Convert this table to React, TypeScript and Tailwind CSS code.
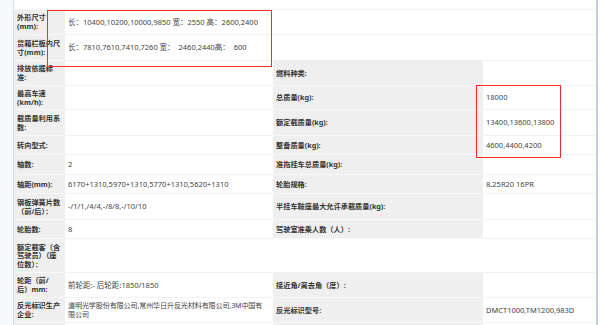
import React from "react";

type Row = {
  h: string;
  label?: React.ReactNode;
  value?: React.ReactNode;
  label2?: React.ReactNode;
  value2?: React.ReactNode;
  wide?: boolean;
  blank?: boolean;
};

const rows: Row[] = [
  { h: "h-[10px]", blank: true },
  {
    h: "h-[25px]",
    label: (
      <>
        外形尺寸
        <br />
        (mm):
      </>
    ),
    value: "长：10400,10200,10000,9850 宽：2550 高：2600,2400",
    wide: true,
  },
  {
    h: "h-[26px]",
    label: (
      <>
        货箱栏板内尺
        <br />
        寸(mm):
      </>
    ),
    value: "长：7810,7610,7410,7260 宽：\u00a0 2460,2440高：\u00a0 600",
    wide: true,
  },
  {
    h: "h-[25px]",
    label: (
      <>
        排放依据标
        <br />
        准:
      </>
    ),
    label2: "燃料种类:",
  },
  {
    h: "h-[24px]",
    label: (
      <>
        最高车速
        <br />
        (km/h):
      </>
    ),
    label2: "总质量(kg):",
    value2: "18000",
  },
  {
    h: "h-[26px]",
    label: (
      <>
        载质量利用系
        <br />
        数:
      </>
    ),
    label2: "额定载质量(kg):",
    value2: "13400,13600,13800",
  },
  {
    h: "h-[19px]",
    label: "转向型式:",
    label2: "整备质量(kg):",
    value2: "4600,4400,4200",
  },
  { h: "h-[20px]", label: "轴数:", value: "2", label2: "准拖挂车总质量(kg):" },
  {
    h: "h-[19px]",
    label: "轴距(mm):",
    value: "6170+1310,5970+1310,5770+1310,5620+1310",
    label2: "轮胎规格:",
    value2: "8.25R20 16PR",
  },
  {
    h: "h-[26px]",
    label: (
      <>
        钢板弹簧片数
        <br />
        （前/后）：
      </>
    ),
    value: "-/1/1,/4/4,-/8/8,-/10/10",
    label2: "半挂车鞍座最大允许承载质量(kg):",
  },
  { h: "h-[19px]", label: "轮胎数:", value: "8", label2: "驾驶室准乘人数（人）:" },
  {
    h: "h-[34px]",
    label: (
      <>
        额定载客（含
        <br />
        驾驶员）（座
        <br />
        位数）：
      </>
    ),
    wide: true,
  },
  {
    h: "h-[25px]",
    label: (
      <>
        轮距（前/
        <br />
        后）mm:
      </>
    ),
    value: "前轮距:- 后轮距:1850/1850",
    label2: "接近角/离去角（度）:",
  },
  {
    h: "h-[25px]",
    label: (
      <>
        反光标识生产
        <br />
        企业:
      </>
    ),
    value: (
      <span className="whitespace-nowrap text-[7.1px] tracking-[-0.15px]">
        道明光学股份有限公司,常州华日升反光材料有限公司,3M中国有
        <br />
        限公司
      </span>
    ),
    label2: "反光标识型号:",
    value2: "DMCT1000,TM1200,983D",
  },
  { h: "h-[10px]", label: "" },
];

const labelCls =
  "flex items-center whitespace-nowrap bg-[#efefef] px-[3px] text-[7.2px] leading-[8.6px] font-bold text-[#333] border-b border-[#f7f7f7]";
const valueCls =
  "flex items-center bg-white px-[3px] text-[7.5px] leading-[8.6px] text-[#444] border-b border-[#f2f2f2]";

export default function App() {
  return (
    <div className="relative flex w-[600px] h-[325px] overflow-hidden bg-white font-['Noto_Sans','Noto_Sans_CJK_SC',sans-serif]">
      <div className="w-[14px] shrink-0 bg-[#f8f9fb] border-r border-[#d8dee6]" />
      <div className="w-[584px] shrink-0 flex flex-col border-r-2 border-[#c3ccd9]">
        {rows.map((r, i) =>
          r.blank ? (
            <div key={i} className={`${r.h} shrink-0 bg-white border-b border-[#f2f2f2]`} />
          ) : (
            <div key={i} className={`${r.h} shrink-0 flex`}>
              <div className={`w-[51px] shrink-0 ${labelCls}`}>{r.label}</div>
              {r.wide ? (
                <div className={`flex-1 ${valueCls}`}>{r.value}</div>
              ) : (
                <>
                  <div className={`w-[208px] shrink-0 ${valueCls}`}>{r.value}</div>
                  <div className={`w-[210px] shrink-0 ${labelCls}`}>{r.label2}</div>
                  <div className={`flex-1 ${valueCls}`}>{r.value2}</div>
                </>
              )}
            </div>
          )
        )}
      </div>

      {/* red highlight boxes */}
      <div className="absolute left-[47px] top-[10px] w-[225px] h-[57px] border-[1.5px] border-[#f2302b]" />
      <div className="absolute left-[476px] top-[85px] w-[85px] h-[73px] border-[1.5px] border-[#f2302b]" />
    </div>
  );
}
